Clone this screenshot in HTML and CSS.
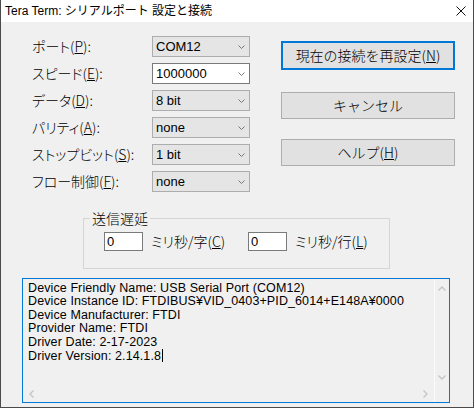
FILE: index.html
```html
<!DOCTYPE html>
<html lang="ja">
<head>
<meta charset="utf-8">
<title>Tera Term: シリアルポート 設定と接続</title>
<link rel="stylesheet" href="styles.css">
</head>
<body>
<div class="window">
  <div class="titlebar">
    <span class="title">Tera Term: シリアルポート 設定と接続</span>
    <svg class="close" width="10" height="10" viewBox="0 0 10 10"><path d="M0.5 0.5 L9.5 9.5 M9.5 0.5 L0.5 9.5" stroke="#111" stroke-width="1" fill="none"/></svg>
  </div>
  <div class="content">
    <div class="top">
      <div class="form">
        <span class="label">ポート(<u>P</u>):</span>
        <div class="combo"><span>COM12</span><svg class="chev" width="7" height="4" viewBox="0 0 7 4"><path d="M0.5 0.5 L3.5 3.5 L6.5 0.5" stroke="#777" fill="none"/></svg></div>
        <span class="label">スピード(<u>E</u>):</span>
        <div class="combo editable"><span>1000000</span><svg class="chev" width="7" height="4" viewBox="0 0 7 4"><path d="M0.5 0.5 L3.5 3.5 L6.5 0.5" stroke="#777" fill="none"/></svg></div>
        <span class="label">データ(<u>D</u>):</span>
        <div class="combo"><span>8 bit</span><svg class="chev" width="7" height="4" viewBox="0 0 7 4"><path d="M0.5 0.5 L3.5 3.5 L6.5 0.5" stroke="#777" fill="none"/></svg></div>
        <span class="label">パリティ(<u>A</u>):</span>
        <div class="combo"><span>none</span><svg class="chev" width="7" height="4" viewBox="0 0 7 4"><path d="M0.5 0.5 L3.5 3.5 L6.5 0.5" stroke="#777" fill="none"/></svg></div>
        <span class="label">ストップビット(<u>S</u>):</span>
        <div class="combo"><span>1 bit</span><svg class="chev" width="7" height="4" viewBox="0 0 7 4"><path d="M0.5 0.5 L3.5 3.5 L6.5 0.5" stroke="#777" fill="none"/></svg></div>
        <span class="label">フロー制御(<u>F</u>):</span>
        <div class="combo"><span>none</span><svg class="chev" width="7" height="4" viewBox="0 0 7 4"><path d="M0.5 0.5 L3.5 3.5 L6.5 0.5" stroke="#777" fill="none"/></svg></div>
      </div>
      <div class="buttons">
        <button class="btn btn-default">現在の接続を再設定(<u>N</u>)</button>
        <button class="btn btn-cancel">キャンセル</button>
        <button class="btn btn-help">ヘルプ(<u>H</u>)</button>
      </div>
    </div>
    <fieldset class="delay">
      <legend>送信遅延</legend>
      <div class="delay-row">
        <div class="edit">0</div>
        <span class="unit">ミリ秒/字(<u>C</u>)</span>
        <div class="edit">0</div>
        <span class="unit">ミリ秒/行(<u>L</u>)</span>
      </div>
    </fieldset>
    <div class="info">
      <div class="info-text">
        <div>Device Friendly Name: USB Serial Port (COM12)</div>
        <div>Device Instance ID: FTDIBUS¥VID_0403+PID_6014+E148A¥0000</div>
        <div>Device Manufacturer: FTDI</div>
        <div>Provider Name: FTDI</div>
        <div>Driver Date: 2-17-2023</div>
        <div>Driver Version: 2.14.1.8<span class="caret"></span></div>
      </div>
      <div class="vscroll">
        <svg width="8" height="5" viewBox="0 0 8 5"><path d="M0.5 4.5 L4 1 L7.5 4.5" stroke="#c4c4c4" stroke-width="1.3" fill="none"/></svg>
        <svg width="8" height="5" viewBox="0 0 8 5"><path d="M0.5 0.5 L4 4 L7.5 0.5" stroke="#c4c4c4" stroke-width="1.3" fill="none"/></svg>
      </div>
      <div class="hscroll">
        <svg width="5" height="8" viewBox="0 0 5 8"><path d="M4.5 0.5 L1 4 L4.5 7.5" stroke="#c4c4c4" stroke-width="1.3" fill="none"/></svg>
        <svg width="5" height="8" viewBox="0 0 5 8"><path d="M0.5 0.5 L4 4 L0.5 7.5" stroke="#c4c4c4" stroke-width="1.3" fill="none"/></svg>
      </div>
      <div class="corner"></div>
    </div>
  </div>
</div>
</body>
</html>
```
FILE: styles.css
```css
html, body {
  margin: 0;
  padding: 0;
}
body {
  width: 475px;
  height: 409px;
  overflow: hidden;
  background: #ffffff;
  font-family: "Noto Sans CJK JP", "Noto Sans", sans-serif;
  font-weight: 300;
  color: #000;
}
.window {
  width: 474px;
  height: 408px;
  box-sizing: border-box;
  border-left: 1px solid #4a4a4a;
  border-right: 1px solid #4a4a4a;
  border-bottom: 1px solid #4a4a4a;
  background: #f0f0f0;
  display: flex;
  flex-direction: column;
}
.titlebar {
  height: 22px;
  flex: none;
  background: #ffffff;
  display: flex;
  align-items: center;
  justify-content: space-between;
  padding: 0 7px 0 4px;
  font-size: 12px;
}
.title {
  line-height: 22px;
  font-family: "Liberation Sans", "Noto Sans CJK JP", sans-serif;
  font-weight: 400;
}
.close {
  display: block;
}
.content {
  padding: 14px 0 0 21px;
  display: flex;
  flex-direction: column;
  align-items: flex-start;
}
.top {
  display: flex;
  gap: 31px;
  padding-left: 10px;
}
.form {
  display: grid;
  grid-template-columns: 120px 98px;
  grid-auto-rows: 21px;
  row-gap: 6px;
  align-items: center;
}
.label {
  font-size: 14px;
  line-height: 21px;
  font-feature-settings: "palt";
  white-space: nowrap;
}
.combo {
  height: 21px;
  box-sizing: border-box;
  border: 1px solid #adadad;
  background: #e5e5e5;
  display: flex;
  align-items: center;
  justify-content: space-between;
  padding: 0 4px 0 3px;
  font-family: "Liberation Sans", sans-serif;
  font-weight: 400;
  font-size: 13px;
  line-height: 19px;
}
.combo.editable {
  background: #ffffff;
  border-color: #7a7a7a;
}
.chev {
  display: block;
}
.buttons {
  display: flex;
  flex-direction: column;
  width: 174px;
  margin-top: 5px;
}
.btn {
  font-family: "Noto Sans CJK JP", sans-serif;
  font-weight: 300;
  font-size: 14px;
  color: #000;
  background: #e1e1e1;
  border: 1px solid #adadad;
  padding: 0;
  margin: 0;
  width: 174px;
  height: 27px;
  box-sizing: border-box;
  line-height: 25px;
}
.btn-default {
  height: 29px;
  border: 2px solid #0078d7;
  line-height: 25px;
  margin-bottom: 22px;
}
.btn-cancel {
  margin-bottom: 20px;
}
.delay {
  margin: 17px 0 0 61px;
  width: 307px;
  box-sizing: border-box;
  border: 1px solid #d5d5d5;
  padding: 0 0 17px 6px;
  min-width: 0;
}
.delay legend {
  padding: 0 2px;
  font-size: 14px;
  line-height: 18px;
}
.delay-row {
  margin: 4px 0 0 14px;
  display: grid;
  grid-template-columns: 39px 105px 39px auto;
  align-items: center;
}
.edit {
  height: 19px;
  box-sizing: border-box;
  border: 1px solid #7a7a7a;
  background: #ffffff;
  font-family: "Liberation Sans", sans-serif;
  font-weight: 400;
  font-size: 13px;
  line-height: 17px;
  padding-left: 2px;
}
.unit {
  font-size: 14px;
  padding-left: 8px;
  white-space: nowrap;
  font-feature-settings: "palt";
}
.info {
  margin-top: 9px;
  width: 428px;
  height: 125px;
  box-sizing: border-box;
  border: 1px solid #0078d7;
  display: grid;
  grid-template-columns: 1fr 15px;
  grid-template-rows: 1fr 16px;
}
.info-text {
  padding: 3px 5px;
  font-family: "Liberation Sans", sans-serif;
  font-weight: 400;
  font-size: 12.5px;
  letter-spacing: 0.1px;
  line-height: 13.4px;
  white-space: nowrap;
  overflow: hidden;
}
.caret {
  display: inline-block;
  width: 0;
  height: 13px;
  border-left: 1px solid #000;
  vertical-align: -2px;
  margin-left: 1px;
}
.vscroll {
  border-left: 1px solid #fbfbfb;
  display: flex;
  flex-direction: column;
  justify-content: space-between;
  align-items: center;
  padding: 7px 0 6px;
}
.vscroll svg, .hscroll svg {
  display: block;
}
.hscroll {
  display: flex;
  justify-content: space-between;
  align-items: center;
  padding: 0 6px 0 6px;
}
.corner {
  border-left: 1px solid #fbfbfb;
}
```
